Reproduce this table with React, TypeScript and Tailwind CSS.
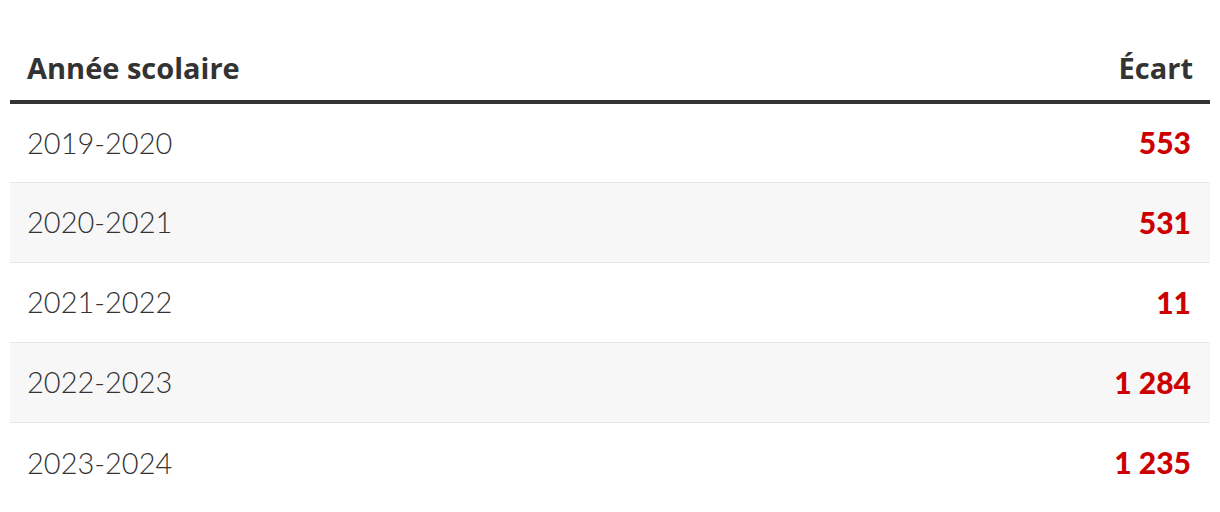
const rows = [
  { year: "2019-2020", gap: "553" },
  { year: "2020-2021", gap: "531" },
  { year: "2021-2022", gap: "11" },
  { year: "2022-2023", gap: "1 284" },
  { year: "2023-2024", gap: "1 235" },
];

export default function App() {
  return (
    <div className="min-h-[512px] bg-white px-[10px] pt-[48px]">
      <table className="w-full border-collapse">
        <thead>
          <tr className="border-b-4 border-[#333333]">
            <th className="px-[17px] pb-[12px] text-left font-['Open_Sans',sans-serif] text-[29px] font-bold leading-[40px] text-[#333333]">
              Année scolaire
            </th>
            <th className="px-[17px] pb-[12px] text-right font-['Open_Sans',sans-serif] text-[29px] font-bold leading-[40px] text-[#333333]">
              Écart
            </th>
          </tr>
        </thead>
        <tbody>
          {rows.map((row, i) => (
            <tr
              key={row.year}
              className={`h-[80px] border-[#e6e6e6] ${i < rows.length - 1 ? "border-b" : ""} ${i % 2 === 1 ? "bg-[#f7f7f7]" : "bg-white"}`}
            >
              <td className="px-[17px] font-['Lato',sans-serif] text-[29px] font-light text-[#333333]">
                {row.year}
              </td>
              <td className="pl-[17px] pr-[19px] text-right font-['Lato',sans-serif] text-[30px] font-black text-[#cc0000]">
                {row.gap}
              </td>
            </tr>
          ))}
        </tbody>
      </table>
    </div>
  );
}
